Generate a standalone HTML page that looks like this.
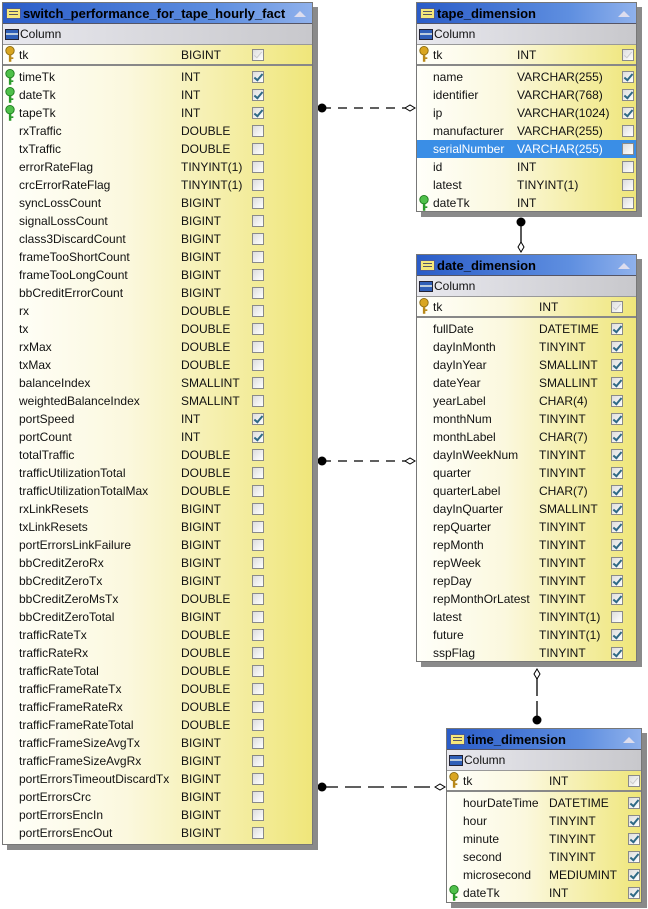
<!DOCTYPE html>
<html><head><meta charset="utf-8">
<style>
*{margin:0;padding:0;box-sizing:border-box}
body{width:648px;height:909px;background:#fff;position:relative;overflow:hidden;font-family:"Liberation Sans",sans-serif;font-size:12px;color:#111}
.t{position:absolute;background:linear-gradient(to right,#fffffa 0%,#fbf8de 40%,#efe67a 100%);border:1px solid #777;box-shadow:5px 5px 0 #8a8a8a}
.h{position:absolute;left:0;right:0;top:0;height:21px;background:linear-gradient(to right,#2a5cc8,#5f8fe0 70%,#8fb1ec);color:#000;font-weight:bold;font-size:13px;line-height:21px;padding-left:20px;border-bottom:1px solid #556;white-space:nowrap}
.h .ti{position:absolute;left:3px;top:5px;width:15px;height:11px;background:#f5e77a;border:1px solid #4a5a9a}
.h .ti:before{content:"";position:absolute;left:2px;right:2px;top:2px;height:1px;background:#556;box-shadow:0 3px 0 #556}
.h .up{position:absolute;right:6px;top:8px;width:0;height:0;border-left:6px solid transparent;border-right:6px solid transparent;border-bottom:6px solid #dde}
.c{position:absolute;left:0;right:0;top:21px;height:21px;background:linear-gradient(to right,#e8e8ee,#c8c8cc);line-height:21px;padding-left:17px;border-bottom:1px solid #999}
.c .ci{position:absolute;left:2px;top:5px;width:14px;height:11px;background:#2f5fb8;border:1px solid #223}
.c .ci:before{content:"";position:absolute;left:0;right:0;top:3px;height:2px;background:#bcd}
.r{position:absolute;left:0;right:0;height:18px;line-height:18px}
.r span{position:absolute;top:0}
.n{left:16px}
.b{top:3px!important;width:12px;height:12px;border:1px solid #8a8a8a;background:linear-gradient(135deg,#ddd,#fff);}
.b.x:after{content:"";position:absolute;left:3px;top:0px;width:3px;height:7px;border:solid #2f6a86;border-width:0 2px 2px 0;transform:rotate(40deg)}
.b.f:after{content:"";position:absolute;left:3px;top:0px;width:3px;height:7px;border:solid #ccc;border-width:0 1px 1px 0;transform:rotate(40deg)}
.tk{top:42px;height:21px;line-height:21px;border-bottom:2px solid #888}
.tk .b{top:4px!important}
.sel{background:#3a8ee6;color:#fff}
.k{position:absolute;left:2px;top:1px;width:10px;height:16px}
.t1 .y{left:178px}.t1 .b{left:249px}
.t2 .y{left:100px}.t2 .b{left:205px}
.t3 .y{left:122px}.t3 .b{left:194px}
.t4 .y{left:102px}.t4 .b{left:181px}
svg.ln{position:absolute;left:0;top:0}
</style></head><body>

<svg class="ln" width="648" height="909">
<g stroke="#000" stroke-width="1.3" fill="none">
<line x1="322" y1="108" x2="406" y2="108" stroke-dasharray="9,7"/>
<line x1="322" y1="461" x2="406" y2="461" stroke-dasharray="9,7"/>
<line x1="322" y1="787" x2="436" y2="787" stroke-dasharray="16,7"/>
<line x1="521" y1="218" x2="521" y2="242"/>
<line x1="537" y1="676" x2="537" y2="716" stroke-dasharray="20,5"/>
</g>
<g fill="#000"><circle cx="322" cy="108" r="4.5"/><circle cx="322" cy="461" r="4.5"/><circle cx="322" cy="787" r="4.5"/><circle cx="521" cy="222" r="4.5"/><circle cx="537" cy="720" r="4.5"/></g>
<g fill="#fff" stroke="#000" stroke-width="1">
<path d="M405 108 L410 105 L415 108 L410 111Z"/><path d="M405 461 L410 458 L415 461 L410 464Z"/><path d="M435 787 L440 784 L445 787 L440 790Z"/>
<path d="M521 242 L524 247 L521 252 L518 247Z"/><path d="M537 669 L540 674 L537 679 L534 674Z"/>
</g>
<defs>
<g id="gk"><circle cx="4.5" cy="4" r="3.8" fill="#d9a520" stroke="#8a6a10" stroke-width=".8"/><rect x="3.5" y="7" width="2.2" height="7" fill="#b88818"/><rect x="5.5" y="10" width="2" height="1.5" fill="#b88818"/></g>
<g id="fk"><circle cx="4.5" cy="4" r="3.8" fill="#4fc04a" stroke="#1e7a1e" stroke-width=".8"/><rect x="3.5" y="7" width="2.2" height="7" fill="#2a9a2a"/><rect x="5.5" y="10" width="2" height="1.5" fill="#2a9a2a"/></g>
</defs>
</svg>

<!-- Table 1 -->
<div class="t t1" style="left:2px;top:2px;width:311px;height:843px">
<div class="h"><i class="ti"></i>switch_performance_for_tape_hourly_fact<i class="up"></i></div>
<div class="c"><i class="ci"></i>Column</div>
<div class="r tk"><svg class="k" viewBox="0 0 9 14"><use href="#gk"/></svg><span class="n">tk</span><span class="y">BIGINT</span><span class="b f"></span></div>
<div class="r" style="top:65px"><svg class="k" viewBox="0 0 9 14"><use href="#fk"/></svg><span class="n">timeTk</span><span class="y">INT</span><span class="b x"></span></div>
<div class="r" style="top:83px"><svg class="k" viewBox="0 0 9 14"><use href="#fk"/></svg><span class="n">dateTk</span><span class="y">INT</span><span class="b x"></span></div>
<div class="r" style="top:101px"><svg class="k" viewBox="0 0 9 14"><use href="#fk"/></svg><span class="n">tapeTk</span><span class="y">INT</span><span class="b x"></span></div>
<div class="r" style="top:119px"><span class="n">rxTraffic</span><span class="y">DOUBLE</span><span class="b"></span></div>
<div class="r" style="top:137px"><span class="n">txTraffic</span><span class="y">DOUBLE</span><span class="b"></span></div>
<div class="r" style="top:155px"><span class="n">errorRateFlag</span><span class="y">TINYINT(1)</span><span class="b"></span></div>
<div class="r" style="top:173px"><span class="n">crcErrorRateFlag</span><span class="y">TINYINT(1)</span><span class="b"></span></div>
<div class="r" style="top:191px"><span class="n">syncLossCount</span><span class="y">BIGINT</span><span class="b"></span></div>
<div class="r" style="top:209px"><span class="n">signalLossCount</span><span class="y">BIGINT</span><span class="b"></span></div>
<div class="r" style="top:227px"><span class="n">class3DiscardCount</span><span class="y">BIGINT</span><span class="b"></span></div>
<div class="r" style="top:245px"><span class="n">frameTooShortCount</span><span class="y">BIGINT</span><span class="b"></span></div>
<div class="r" style="top:263px"><span class="n">frameTooLongCount</span><span class="y">BIGINT</span><span class="b"></span></div>
<div class="r" style="top:281px"><span class="n">bbCreditErrorCount</span><span class="y">BIGINT</span><span class="b"></span></div>
<div class="r" style="top:299px"><span class="n">rx</span><span class="y">DOUBLE</span><span class="b"></span></div>
<div class="r" style="top:317px"><span class="n">tx</span><span class="y">DOUBLE</span><span class="b"></span></div>
<div class="r" style="top:335px"><span class="n">rxMax</span><span class="y">DOUBLE</span><span class="b"></span></div>
<div class="r" style="top:353px"><span class="n">txMax</span><span class="y">DOUBLE</span><span class="b"></span></div>
<div class="r" style="top:371px"><span class="n">balanceIndex</span><span class="y">SMALLINT</span><span class="b"></span></div>
<div class="r" style="top:389px"><span class="n">weightedBalanceIndex</span><span class="y">SMALLINT</span><span class="b"></span></div>
<div class="r" style="top:407px"><span class="n">portSpeed</span><span class="y">INT</span><span class="b x"></span></div>
<div class="r" style="top:425px"><span class="n">portCount</span><span class="y">INT</span><span class="b x"></span></div>
<div class="r" style="top:443px"><span class="n">totalTraffic</span><span class="y">DOUBLE</span><span class="b"></span></div>
<div class="r" style="top:461px"><span class="n">trafficUtilizationTotal</span><span class="y">DOUBLE</span><span class="b"></span></div>
<div class="r" style="top:479px"><span class="n">trafficUtilizationTotalMax</span><span class="y">DOUBLE</span><span class="b"></span></div>
<div class="r" style="top:497px"><span class="n">rxLinkResets</span><span class="y">BIGINT</span><span class="b"></span></div>
<div class="r" style="top:515px"><span class="n">txLinkResets</span><span class="y">BIGINT</span><span class="b"></span></div>
<div class="r" style="top:533px"><span class="n">portErrorsLinkFailure</span><span class="y">BIGINT</span><span class="b"></span></div>
<div class="r" style="top:551px"><span class="n">bbCreditZeroRx</span><span class="y">BIGINT</span><span class="b"></span></div>
<div class="r" style="top:569px"><span class="n">bbCreditZeroTx</span><span class="y">BIGINT</span><span class="b"></span></div>
<div class="r" style="top:587px"><span class="n">bbCreditZeroMsTx</span><span class="y">DOUBLE</span><span class="b"></span></div>
<div class="r" style="top:605px"><span class="n">bbCreditZeroTotal</span><span class="y">BIGINT</span><span class="b"></span></div>
<div class="r" style="top:623px"><span class="n">trafficRateTx</span><span class="y">DOUBLE</span><span class="b"></span></div>
<div class="r" style="top:641px"><span class="n">trafficRateRx</span><span class="y">DOUBLE</span><span class="b"></span></div>
<div class="r" style="top:659px"><span class="n">trafficRateTotal</span><span class="y">DOUBLE</span><span class="b"></span></div>
<div class="r" style="top:677px"><span class="n">trafficFrameRateTx</span><span class="y">DOUBLE</span><span class="b"></span></div>
<div class="r" style="top:695px"><span class="n">trafficFrameRateRx</span><span class="y">DOUBLE</span><span class="b"></span></div>
<div class="r" style="top:713px"><span class="n">trafficFrameRateTotal</span><span class="y">DOUBLE</span><span class="b"></span></div>
<div class="r" style="top:731px"><span class="n">trafficFrameSizeAvgTx</span><span class="y">BIGINT</span><span class="b"></span></div>
<div class="r" style="top:749px"><span class="n">trafficFrameSizeAvgRx</span><span class="y">BIGINT</span><span class="b"></span></div>
<div class="r" style="top:767px"><span class="n">portErrorsTimeoutDiscardTx</span><span class="y">BIGINT</span><span class="b"></span></div>
<div class="r" style="top:785px"><span class="n">portErrorsCrc</span><span class="y">BIGINT</span><span class="b"></span></div>
<div class="r" style="top:803px"><span class="n">portErrorsEncIn</span><span class="y">BIGINT</span><span class="b"></span></div>
<div class="r" style="top:821px"><span class="n">portErrorsEncOut</span><span class="y">BIGINT</span><span class="b"></span></div>
</div>

<!-- tape_dimension -->
<div class="t t2" style="left:416px;top:2px;width:221px;height:210px">
<div class="h"><i class="ti"></i>tape_dimension<i class="up"></i></div>
<div class="c"><i class="ci"></i>Column</div>
<div class="r tk"><svg class="k" viewBox="0 0 9 14"><use href="#gk"/></svg><span class="n">tk</span><span class="y">INT</span><span class="b f"></span></div>
<div class="r" style="top:65px"><span class="n">name</span><span class="y">VARCHAR(255)</span><span class="b x"></span></div>
<div class="r" style="top:83px"><span class="n">identifier</span><span class="y">VARCHAR(768)</span><span class="b x"></span></div>
<div class="r" style="top:101px"><span class="n">ip</span><span class="y">VARCHAR(1024)</span><span class="b x"></span></div>
<div class="r" style="top:119px"><span class="n">manufacturer</span><span class="y">VARCHAR(255)</span><span class="b"></span></div>
<div class="r sel" style="top:137px"><span class="n">serialNumber</span><span class="y">VARCHAR(255)</span><span class="b"></span></div>
<div class="r" style="top:155px"><span class="n">id</span><span class="y">INT</span><span class="b"></span></div>
<div class="r" style="top:173px"><span class="n">latest</span><span class="y">TINYINT(1)</span><span class="b"></span></div>
<div class="r" style="top:191px"><svg class="k" viewBox="0 0 9 14"><use href="#fk"/></svg><span class="n">dateTk</span><span class="y">INT</span><span class="b"></span></div>
</div>

<!-- date_dimension -->
<div class="t t3" style="left:416px;top:254px;width:221px;height:408px">
<div class="h"><i class="ti"></i>date_dimension<i class="up"></i></div>
<div class="c"><i class="ci"></i>Column</div>
<div class="r tk"><svg class="k" viewBox="0 0 9 14"><use href="#gk"/></svg><span class="n">tk</span><span class="y">INT</span><span class="b f"></span></div>
<div class="r" style="top:65px"><span class="n">fullDate</span><span class="y">DATETIME</span><span class="b x"></span></div>
<div class="r" style="top:83px"><span class="n">dayInMonth</span><span class="y">TINYINT</span><span class="b x"></span></div>
<div class="r" style="top:101px"><span class="n">dayInYear</span><span class="y">SMALLINT</span><span class="b x"></span></div>
<div class="r" style="top:119px"><span class="n">dateYear</span><span class="y">SMALLINT</span><span class="b x"></span></div>
<div class="r" style="top:137px"><span class="n">yearLabel</span><span class="y">CHAR(4)</span><span class="b x"></span></div>
<div class="r" style="top:155px"><span class="n">monthNum</span><span class="y">TINYINT</span><span class="b x"></span></div>
<div class="r" style="top:173px"><span class="n">monthLabel</span><span class="y">CHAR(7)</span><span class="b x"></span></div>
<div class="r" style="top:191px"><span class="n">dayInWeekNum</span><span class="y">TINYINT</span><span class="b x"></span></div>
<div class="r" style="top:209px"><span class="n">quarter</span><span class="y">TINYINT</span><span class="b x"></span></div>
<div class="r" style="top:227px"><span class="n">quarterLabel</span><span class="y">CHAR(7)</span><span class="b x"></span></div>
<div class="r" style="top:245px"><span class="n">dayInQuarter</span><span class="y">SMALLINT</span><span class="b x"></span></div>
<div class="r" style="top:263px"><span class="n">repQuarter</span><span class="y">TINYINT</span><span class="b x"></span></div>
<div class="r" style="top:281px"><span class="n">repMonth</span><span class="y">TINYINT</span><span class="b x"></span></div>
<div class="r" style="top:299px"><span class="n">repWeek</span><span class="y">TINYINT</span><span class="b x"></span></div>
<div class="r" style="top:317px"><span class="n">repDay</span><span class="y">TINYINT</span><span class="b x"></span></div>
<div class="r" style="top:335px"><span class="n">repMonthOrLatest</span><span class="y">TINYINT</span><span class="b x"></span></div>
<div class="r" style="top:353px"><span class="n">latest</span><span class="y">TINYINT(1)</span><span class="b"></span></div>
<div class="r" style="top:371px"><span class="n">future</span><span class="y">TINYINT(1)</span><span class="b x"></span></div>
<div class="r" style="top:389px"><span class="n">sspFlag</span><span class="y">TINYINT</span><span class="b x"></span></div>
</div>

<!-- time_dimension -->
<div class="t t4" style="left:446px;top:728px;width:196px;height:175px">
<div class="h"><i class="ti"></i>time_dimension<i class="up"></i></div>
<div class="c"><i class="ci"></i>Column</div>
<div class="r tk"><svg class="k" viewBox="0 0 9 14"><use href="#gk"/></svg><span class="n">tk</span><span class="y">INT</span><span class="b f"></span></div>
<div class="r" style="top:65px"><span class="n">hourDateTime</span><span class="y">DATETIME</span><span class="b x"></span></div>
<div class="r" style="top:83px"><span class="n">hour</span><span class="y">TINYINT</span><span class="b x"></span></div>
<div class="r" style="top:101px"><span class="n">minute</span><span class="y">TINYINT</span><span class="b x"></span></div>
<div class="r" style="top:119px"><span class="n">second</span><span class="y">TINYINT</span><span class="b x"></span></div>
<div class="r" style="top:137px"><span class="n">microsecond</span><span class="y">MEDIUMINT</span><span class="b x"></span></div>
<div class="r" style="top:155px"><svg class="k" viewBox="0 0 9 14"><use href="#fk"/></svg><span class="n">dateTk</span><span class="y">INT</span><span class="b x"></span></div>
</div>

</body></html>
